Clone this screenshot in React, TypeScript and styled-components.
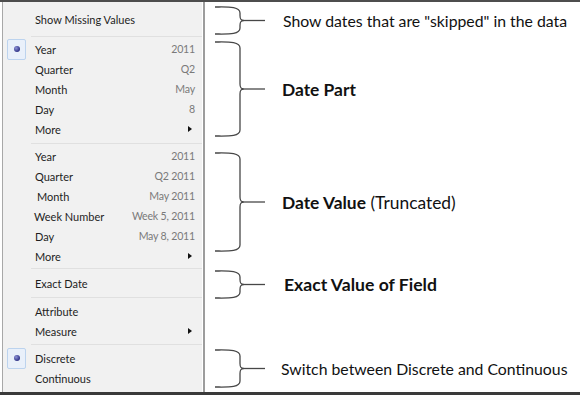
import styled, { createGlobalStyle } from "styled-components";

const GlobalStyle = createGlobalStyle`
  html, body {
    margin: 0;
    padding: 0;
    background: #fff;
  }
  body {
    width: 580px;
    height: 395px;
    overflow: hidden;
  }
`;

const Frame = styled.div`
  display: flex;
  width: 580px;
  height: 395px;
  box-sizing: border-box;
  border-top: 2px solid #4d4d4d;
  border-bottom: 3px solid #3a3a3a;
  padding-left: 2px;
  background: #fff;
`;

const Menu = styled.div`
  display: flex;
  flex-direction: column;
  width: 199px;
  border-left: 1px solid #a8a8a8;
  background: #f1f1f1;
  font-family: "Lato", "Noto Sans", sans-serif;
  font-size: 11px;
  color: #1e1e1e;
`;

const Group = styled.div<{ $h: number; $pad: number }>`
  display: flex;
  flex-direction: column;
  height: ${(p) => p.$h}px;
  box-sizing: border-box;
  padding-top: ${(p) => p.$pad}px;

  & + & {
    background: linear-gradient(#e0e0e0, #e0e0e0) 28px 0 / calc(100% - 28px) 1px
      no-repeat;
  }
`;

const Row = styled.div<{ $center?: boolean }>`
  display: flex;
  align-items: center;
  height: 20px;
  padding-right: 7px;
  ${(p) => (p.$center ? "flex: 1;" : "")}
`;

const Gutter = styled.span`
  display: flex;
  align-items: center;
  width: 32px;
  height: 100%;
  flex: none;
`;

const Label = styled.span<{ $shift?: number }>`
  flex: 1;
  margin-left: ${(p) => p.$shift ?? 0}px;
  white-space: nowrap;
`;

const Value = styled.span`
  color: #7a7a7a;
  font-size: 10.6px;
  letter-spacing: -0.2px;
  white-space: nowrap;
`;

const Arrow = styled.span`
  width: 0;
  height: 0;
  margin-right: 3px;
  border-top: 3.5px solid transparent;
  border-bottom: 3.5px solid transparent;
  border-left: 4px solid #111;
`;

const RadioBox = styled.span`
  display: flex;
  align-items: center;
  justify-content: center;
  width: 17px;
  height: 19px;
  margin-left: 4px;
  border: 1px solid #bcd3ee;
  border-radius: 2px;
  background: #e9f0fa;

  &::after {
    content: "";
    width: 6px;
    height: 6px;
    border-radius: 50%;
    background: radial-gradient(circle at 35% 35%, #8f93d6, #303488 70%);
  }
`;

const Divider = styled.div`
  width: 2px;
  margin-left: 1px;
  background: #9d9d9d;
`;

const Notes = styled.div`
  display: flex;
  flex-direction: column;
  flex: 1;
  font-family: "Lato", "Liberation Sans", sans-serif;
  color: #111;
`;

const Note = styled.div<{ $h: number }>`
  display: flex;
  align-items: center;
  height: ${(p) => p.$h}px;
  padding-left: 8px;
`;

const NoteText = styled.span<{ $size: number; $gap: number }>`
  margin-left: ${(p) => p.$gap}px;
  font-size: ${(p) => p.$size}px;
  white-space: nowrap;
`;

const Strong = styled.b`
  font-weight: 700;
`;

type Item = {
  label: string;
  value?: string;
  more?: boolean;
  checked?: boolean;
  shift?: number;
};

const groups: { h: number; pad: number; items: Item[]; center?: boolean }[] = [
  { h: 34, pad: 1, center: true, items: [{ label: "Show Missing Values" }] },
  {
    h: 107,
    pad: 3,
    items: [
      { label: "Year", value: "2011", checked: true },
      { label: "Quarter", value: "Q2" },
      { label: "Month", value: "May" },
      { label: "Day", value: "8" },
      { label: "More", more: true },
    ],
  },
  {
    h: 125,
    pad: 3,
    items: [
      { label: "Year", value: "2011" },
      { label: "Quarter", value: "Q2 2011" },
      { label: "Month", value: "May 2011", shift: 2 },
      { label: "Week Number", value: "Week 5, 2011", shift: -1 },
      { label: "Day", value: "May 8, 2011" },
      { label: "More", more: true },
    ],
  },
  { h: 29, pad: 1, center: true, items: [{ label: "Exact Date" }] },
  {
    h: 47,
    pad: 4,
    items: [{ label: "Attribute" }, { label: "Measure", more: true }],
  },
  {
    h: 47,
    pad: 4,
    items: [{ label: "Discrete", checked: true }, { label: "Continuous" }],
  },
];

const Brace = ({ h }: { h: number }) => {
  const m = h / 2;
  const d = `M2 1 C14 1 27 0 27 7 L27 ${m - 5} C27 ${m - 1} 28 ${m} 31 ${m} C28 ${m} 27 ${m + 1} 27 ${m + 5} L27 ${h - 7} C27 ${h} 14 ${h - 1} 2 ${h - 1}`;
  return (
    <svg width="53" height={h} viewBox={`0 0 53 ${h}`}>
      <path d={d} fill="none" stroke="#474747" strokeWidth="1.3" />
      <path d={`M31 ${m} L52 ${m}`} stroke="#474747" strokeWidth="1.3" />
    </svg>
  );
};

const notes = [
  { h: 36, brace: 29, size: 15.8, gap: 17, text: <>Show dates that are "skipped" in the data</> },
  { h: 102, brace: 96, size: 17.4, gap: 16, text: <Strong>Date Part</Strong> },
  {
    h: 124,
    brace: 100,
    size: 17.4,
    gap: 16,
    text: (
      <>
        <Strong>Date Value</Strong> (Truncated)
      </>
    ),
  },
  { h: 40, brace: 29, size: 17.6, gap: 18, text: <Strong>Exact Value of Field</Strong> },
  { h: 41 },
  { h: 47, brace: 39, size: 15.8, gap: 15, text: <>Switch between Discrete and Continuous</> },
];

export default function App() {
  return (
    <>
      <GlobalStyle />
      <Frame>
        <Menu>
          {groups.map((g, gi) => (
            <Group key={gi} $h={g.h} $pad={g.pad}>
              {g.items.map((it, i) => (
                <Row key={i} $center={g.center}>
                  <Gutter>{it.checked && <RadioBox />}</Gutter>
                  <Label $shift={it.shift}>{it.label}</Label>
                  {it.value && <Value>{it.value}</Value>}
                  {it.more && <Arrow />}
                </Row>
              ))}
            </Group>
          ))}
        </Menu>
        <Divider />
        <Notes>
          {notes.map((n, i) => (
            <Note key={i} $h={n.h}>
              {n.brace && <Brace h={n.brace} />}
              {n.text && (
                <NoteText $size={n.size!} $gap={n.gap!}>
                  {n.text}
                </NoteText>
              )}
            </Note>
          ))}
        </Notes>
      </Frame>
    </>
  );
}
